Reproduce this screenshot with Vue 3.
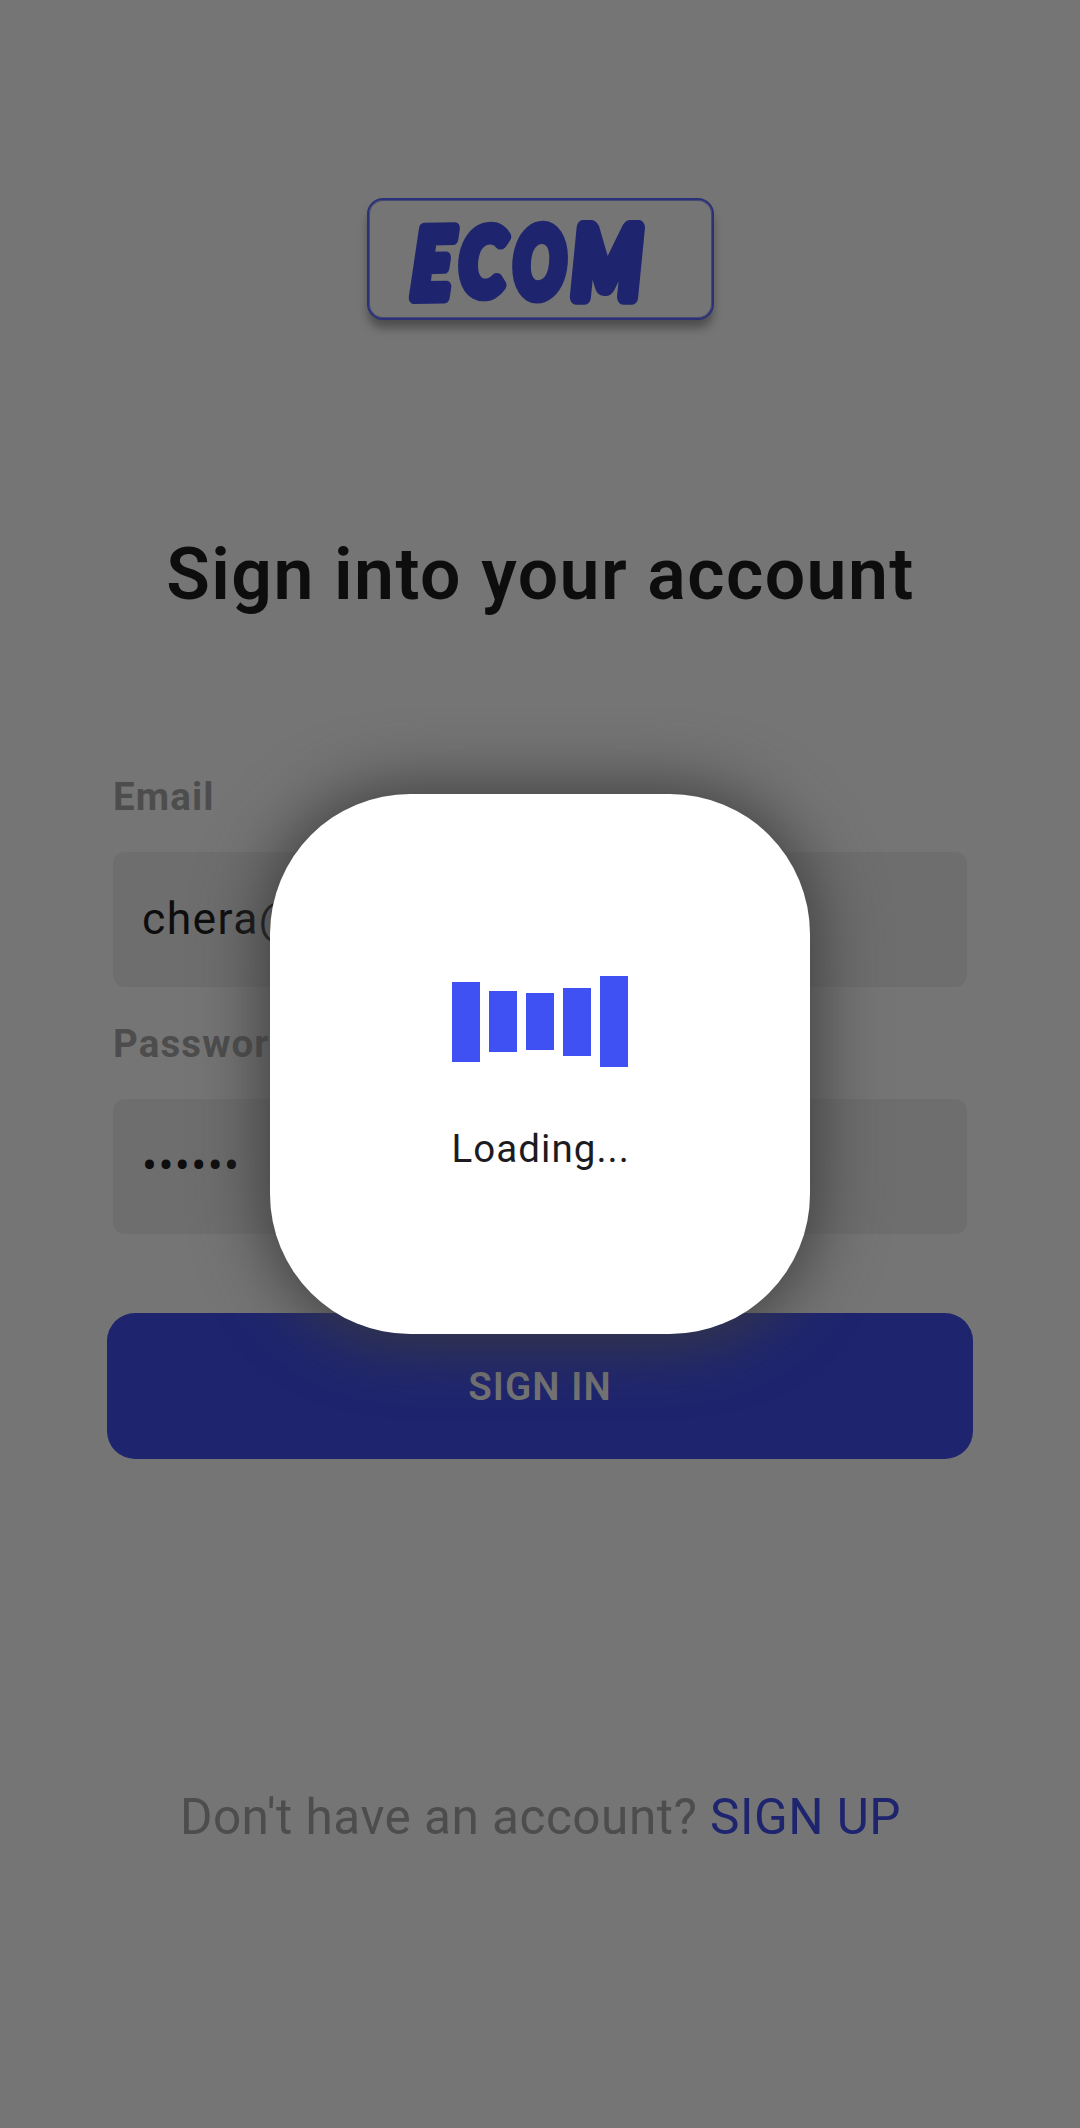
<script setup>
const bars = [80, 61, 57, 68, 91]
</script>

<template>
  <div class="screen">
    <header class="logo">
      <svg width="343" height="117" viewBox="0 0 343 117" aria-label="ECOM">
        <g class="logo-text">
          <text class="thin" transform="translate(42 97.5) rotate(-1) skewX(-4) scale(.78 1)">E</text>
          <text class="mid" transform="translate(91 95) scale(.77 .97)">C</text>
          <text class="mid" transform="translate(145 96.5) scale(.72 1.01)">O</text>
          <text class="wide" transform="translate(204 97) scale(.82 1.02)">M</text>
        </g>
      </svg>
    </header>
    <h1 class="title">Sign into your account</h1>
    <form class="form">
      <label class="label">Email</label>
      <div class="field">chera@gmail.com</div>
      <label class="label">Password</label>
      <div class="field dots">••••••</div>
    </form>
    <button class="submit" type="button">SIGN IN</button>
    <p class="signup">Don't have an account? <a>SIGN UP</a></p>

    <div class="dialog">
      <div class="bars">
        <i v-for="(height, n) in bars" :key="n" :style="{ height: height + 'px' }"></i>
      </div>
      <span class="loading">Loading...</span>
    </div>
  </div>
</template>

<style>
body {
  margin: 0;
}
</style>

<style scoped>
.screen {
  position: relative;
  box-sizing: border-box;
  width: 1080px;
  height: 2128px;
  padding-top: 198px;
  overflow: hidden;
  display: flex;
  flex-direction: column;
  align-items: center;
  background: #757575;
  font-family: Roboto, sans-serif;
  color: #0d0d0e;
}
.logo {
  box-sizing: border-box;
  width: 347px;
  height: 122px;
  border: 2px solid #2a3178;
  border-radius: 16px;
  background: #757575;
  box-shadow: inset 0 0 0 1px rgba(30, 37, 112, 0.55), 0 9px 10px -1px rgba(0, 0, 0, 0.34);
}
.logo svg {
  display: block;
  overflow: visible;
}
.logo-text {
  font: italic 900 94px Lato, sans-serif;
  fill: #1e256e;
  stroke: #1e256e;
  stroke-width: 13px;
  stroke-linejoin: round;
}
.logo-text .mid {
  stroke-width: 12px;
}
.logo-text .thin {
  font-weight: 700;
}
.logo-text .wide {
  font-weight: 700;
  stroke-width: 15px;
}
.title {
  margin: 213px 0 0;
  font-size: 71.5px;
  line-height: 84px;
  font-weight: 600;
  letter-spacing: 1.45px;
  text-indent: 1px;
  white-space: nowrap;
}
.form {
  width: 854px;
  margin-top: 157px;
  display: flex;
  flex-direction: column;
}
.label {
  height: 46px;
  margin-bottom: 32px;
  font-size: 38.5px;
  line-height: 46px;
  font-weight: 700;
  letter-spacing: 1.1px;
  color: #4d4d4d;
}
.field {
  box-sizing: border-box;
  height: 135px;
  margin-bottom: 34px;
  padding-left: 29px;
  border-radius: 12px;
  background: #6e6e6e;
  font-size: 44.5px;
  line-height: 134px;
  letter-spacing: 1.4px;
}
.dots {
  line-height: 135px;
}
.submit {
  width: 866px;
  height: 146px;
  margin-top: 45px;
  padding: 2px 0 0;
  flex: none;
  border: 0;
  border-radius: 28px;
  background: #1e256e;
  color: #757575;
  font: 600 38.5px/144px Roboto, sans-serif;
  letter-spacing: 1.1px;
}
.signup {
  margin: 326px 0 0;
  font-size: 49.5px;
  line-height: 64px;
  letter-spacing: 0.5px;
  text-indent: 1px;
  color: #4d4d4d;
  white-space: nowrap;
}
.signup a {
  color: #1e256e;
}
.dialog {
  position: absolute;
  left: 270px;
  top: 794px;
  width: 540px;
  height: 540px;
  border-radius: 140px;
  display: flex;
  flex-direction: column;
  align-items: center;
  background: #fff;
  box-shadow: 0 0 68px 5px #3c3c3c;
  color: #1c1b1f;
}
.bars {
  height: 91px;
  margin-top: 182px;
  display: flex;
  align-items: center;
  gap: 9px;
}
.bars i {
  width: 28px;
  background: #3f51f3;
}
.loading {
  margin-top: 58px;
  font-size: 38.5px;
  line-height: 48px;
  letter-spacing: 1.05px;
  text-indent: 1.5px;
}
</style>
